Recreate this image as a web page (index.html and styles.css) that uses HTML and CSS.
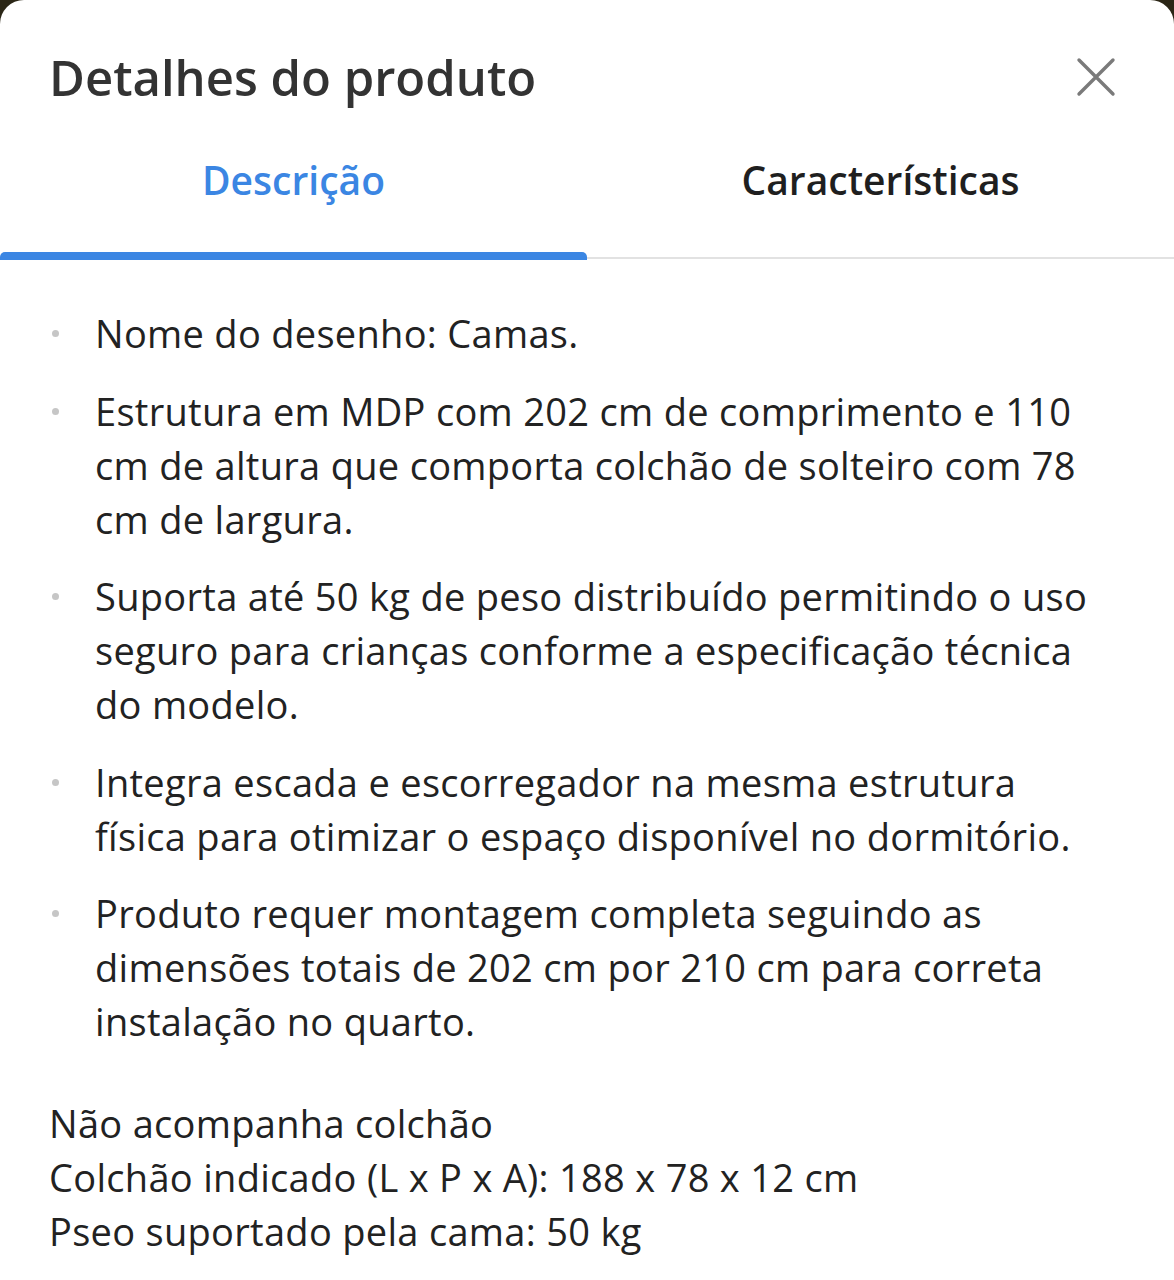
FILE: index.html
```html
<!DOCTYPE html>
<html>
<head>
    <link rel="stylesheet" href="styles.css">
</head>
<body>
    <div class="sheet">
        <div class="header">
            <h1>Detalhes do produto</h1>
            <button class="close" aria-label="Fechar">
                <svg width="40" height="40" viewBox="0 0 40 40">
                    <path d="M3 3 L37 37 M37 3 L3 37" stroke="#7a7a7a" stroke-width="3.4" stroke-linecap="round" fill="none"/>
                </svg>
            </button>
        </div>
        <div class="tabs">
            <div class="tab active">Descrição</div>
            <div class="tab">Características</div>
        </div>
        <div class="content">
            <ul class="bullets">
                <li>Nome do desenho: Camas.</li>
                <li>Estrutura em MDP com 202 cm de comprimento e 110 cm de altura que comporta colchão de solteiro com 78 cm de largura.</li>
                <li>Suporta até 50 kg de peso distribuído permitindo o uso seguro para crianças conforme a especificação técnica do modelo.</li>
                <li>Integra escada e escorregador na mesma estrutura física para otimizar o espaço disponível no dormitório.</li>
                <li>Produto requer montagem completa seguindo as dimensões totais de 202 cm por 210 cm para correta instalação no quarto.</li>
            </ul>
            <p class="notes">
                Não acompanha colchão<br>
                Colchão indicado (L x P x A): 188 x 78 x 12 cm<br>
                Pseo suportado pela cama: 50 kg
            </p>
        </div>
    </div>
</body>
</html>
```

FILE: styles.css
```css
html, body {
    margin: 0;
    padding: 0;
    background-color: #2b2616;
}
body {
    font-family: "Open Sans", Lato, sans-serif;
    color: #222;
}
.sheet {
    background-color: #fff;
    border-radius: 24px 24px 0 0;
    min-height: 1280px;
    box-sizing: border-box;
}
.header {
    display: flex;
    justify-content: space-between;
    align-items: center;
    padding: 44px 58px 0 49px;
}
.header h1 {
    margin: 0;
    font-size: 49px;
    font-weight: 600;
    color: #333;
    line-height: 66px;
}
.close {
    background: none;
    border: none;
    padding: 0;
    width: 40px;
    height: 40px;
    cursor: pointer;
}
.tabs {
    display: flex;
    margin-top: 34px;
    border-bottom: 2px solid #e2e2e2;
}
.tab {
    flex: 1;
    text-align: center;
    font-size: 39px;
    font-weight: 600;
    color: #1f1f1f;
    height: 113px;
    padding-top: 3px;
    line-height: 66px;
    box-sizing: border-box;
    position: relative;
}
.tab.active {
    color: #3b86e3;
}
.tab.active::after {
    content: "";
    position: absolute;
    left: 0;
    right: 0;
    bottom: -3px;
    height: 8px;
    background-color: #3b86e3;
    border-radius: 5px 5px 0 0;
}
.content {
    padding: 47px 64px 40px 49px;
}
.bullets {
    list-style: none;
    margin: 0;
    padding: 0 0 0 46px;
}
.bullets li {
    position: relative;
    font-size: 38px;
    letter-spacing: 0.3px;
    line-height: 54px;
    margin-bottom: 23.5px;
}
.bullets li::before {
    content: "";
    position: absolute;
    left: -43px;
    top: 24px;
    width: 7px;
    height: 7px;
    border-radius: 50%;
    background-color: #c6c6c6;
}
.notes {
    margin: 48px 0 0 0;
    font-size: 38px;
    letter-spacing: 0.3px;
    line-height: 54px;
}
```
